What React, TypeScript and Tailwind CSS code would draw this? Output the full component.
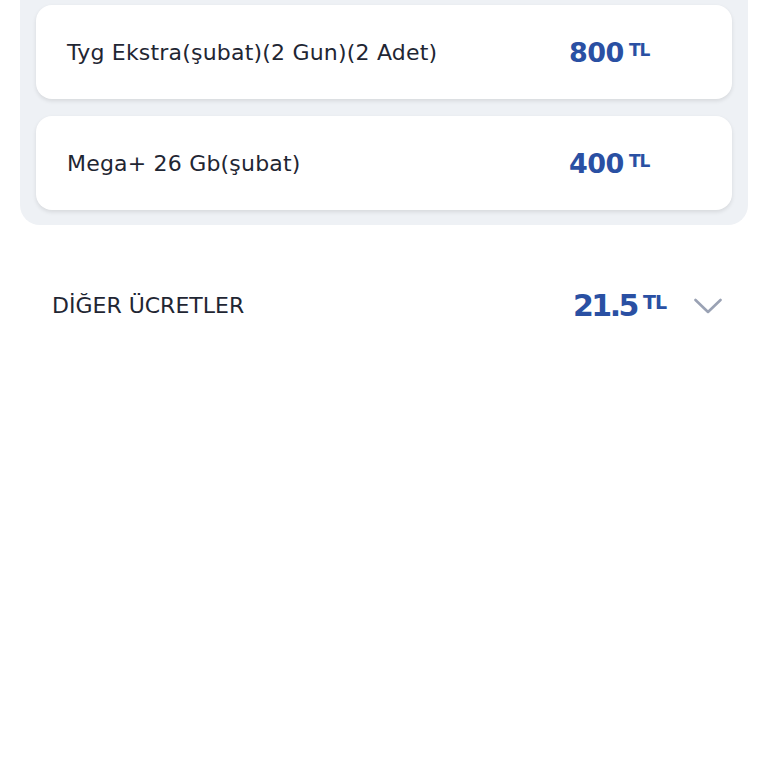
interface Item {
  name: string
  price: string
}

const items: Item[] = [
  { name: 'Tyg Ekstra(şubat)(2 Gun)(2 Adet)', price: '800' },
  { name: 'Mega+ 26 Gb(şubat)', price: '400' },
]

export default function App() {
  return (
    <div className="min-h-[768px] bg-white overflow-hidden" style={{ fontFamily: '"DejaVu Sans", sans-serif' }}>
      <div className="mx-5 -mt-[12px] rounded-b-[20px] bg-[#eef1f5] px-4 pt-[17px] pb-[15px]">
        <div className="flex flex-col gap-[17px]">
          {items.map((item) => (
            <div
              key={item.name}
              className="flex h-[94px] items-center rounded-[16px] bg-white pl-[31px] shadow-[0_2px_4px_rgba(0,0,0,0.10)]"
            >
              <span className="flex-1 text-[22px] text-[#1f2633] tracking-[0.2px]">{item.name}</span>
              <span className="flex w-[163px] items-start">
                <span className="text-[27px] leading-none font-bold tracking-[-0.5px] text-[#2a50a3]">{item.price}</span>
                <span className="ml-[5px] mt-[3px] text-[17px] leading-none font-bold tracking-[-1px] text-[#2a50a3]">TL</span>
              </span>
            </div>
          ))}
        </div>
      </div>
      <div className="mt-[64px] flex items-center pl-[52px] pr-[46px]">
        <span className="flex-1 text-[22px] text-[#1f2633]">DİĞER ÜCRETLER</span>
        <span className="flex items-start">
          <span className="text-[30px] leading-none font-bold tracking-[-2.5px] text-[#2a50a3]">21.5</span>
          <span className="ml-[6px] mt-[2px] text-[19px] leading-none font-bold tracking-[-1px] text-[#2a50a3]">TL</span>
        </span>
        <svg className="ml-[28px]" width="28" height="16" viewBox="0 0 28 16" fill="none">
          <polyline points="1.5,2 14,14 26.5,2" stroke="#9aa2b4" strokeWidth="2.6" strokeLinecap="round" strokeLinejoin="round" />
        </svg>
      </div>
    </div>
  )
}
